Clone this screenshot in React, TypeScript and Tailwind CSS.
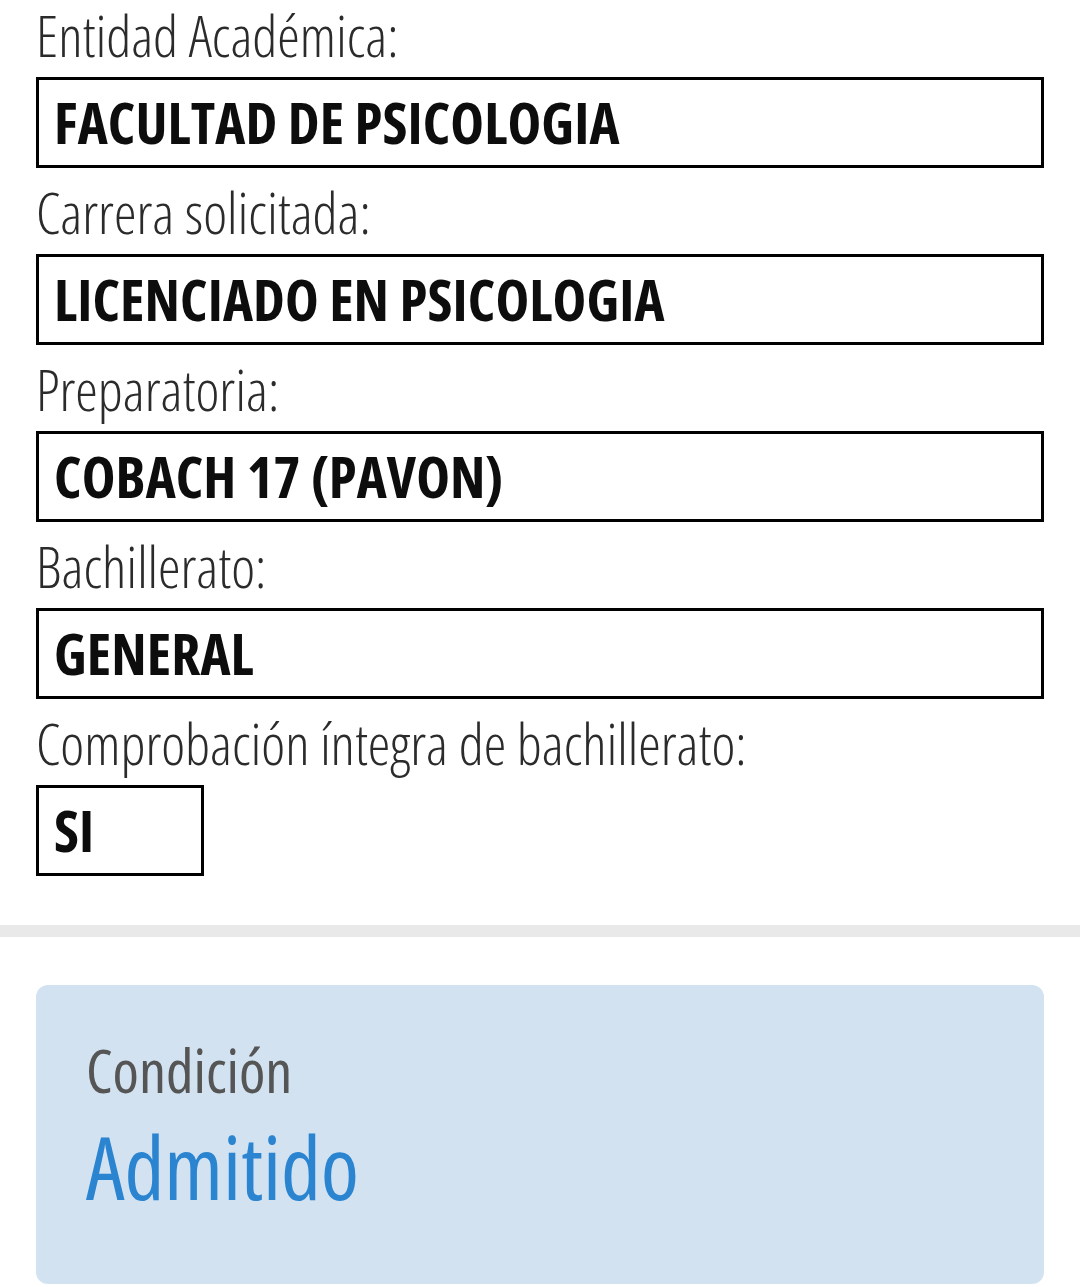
const fields = [
  { label: "Entidad Académica:", value: "FACULTAD DE PSICOLOGIA", full: true },
  { label: "Carrera solicitada:", value: "LICENCIADO EN PSICOLOGIA", full: true },
  { label: "Preparatoria:", value: "COBACH 17 (PAVON)", full: true },
  { label: "Bachillerato:", value: "GENERAL", full: true },
  { label: "Comprobación íntegra de bachillerato:", value: "SI", full: false },
];

export default function App() {
  return (
    <div className="min-h-[1287px] w-[1080px] bg-white font-['Open_Sans',sans-serif] [font-stretch:75%] overflow-hidden">
      <div className="px-[36px] pt-[4px]">
        {fields.map((f, i) => (
          <div key={f.label} className="flex flex-col">
            <div
              className={
                i === 0
                  ? "h-[73px] text-[57px] leading-[62px] font-light text-[#2b2b2b] whitespace-nowrap"
                  : "mt-[9px] h-[77px] text-[57px] leading-[70px] font-light text-[#2b2b2b] whitespace-nowrap"
              }
            >
              {f.label}
            </div>
            <div
              className={
                f.full
                  ? "h-[91px] w-full border-[3px] border-black flex items-center pl-[15px]"
                  : "h-[91px] w-[168px] border-[3px] border-black flex items-center pl-[15px]"
              }
            >
              <span className="text-[57px] font-bold text-[#0d0d0d] leading-none tracking-[0.1px] whitespace-nowrap">{f.value}</span>
            </div>
          </div>
        ))}
      </div>
      <div className="mt-[49px] h-[12px] w-full bg-[#e9e9e9]" />
      <div className="px-[36px] mt-[48px]">
        <div className="h-[299px] rounded-[12px] bg-[#d2e2f1] pl-[50px] pt-[50px]">
          <div className="text-[60px] leading-[70px] text-[#555555]">Condición</div>
          <div className="text-[87px] leading-[100px] text-[#2a84d0] mt-[11px]">Admitido</div>
        </div>
      </div>
    </div>
  );
}
